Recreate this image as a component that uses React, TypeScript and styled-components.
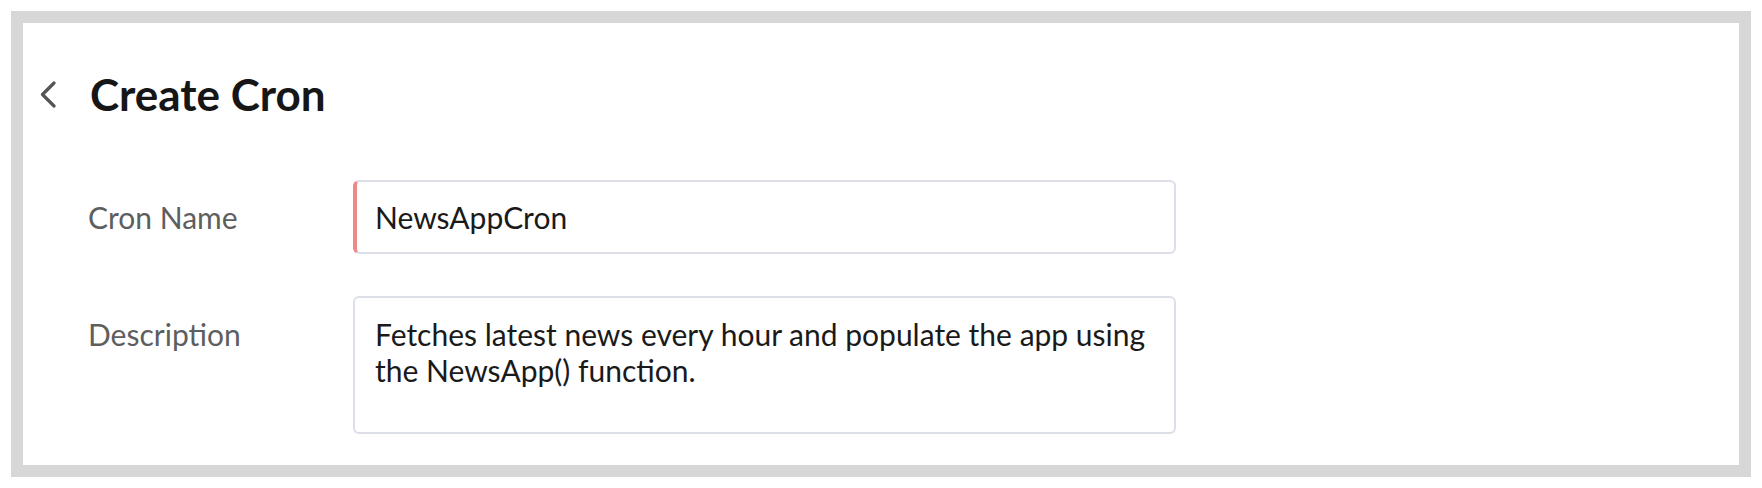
import styled, { createGlobalStyle } from "styled-components";

const GlobalStyle = createGlobalStyle`
  html, body {
    margin: 0;
    padding: 0;
    background: #ffffff;
    font-family: Lato, "Open Sans", sans-serif;
  }
  * {
    box-sizing: border-box;
  }
`;

const Frame = styled.div`
  margin: 11px;
  height: 466px;
  border: 12px solid #d7d7d7;
  background: #ffffff;
  padding: 45px 0 0 16px;
`;

const Header = styled.div`
  display: flex;
  align-items: center;
  gap: 33px;
`;

const BackButton = styled.button`
  display: flex;
  align-items: center;
  justify-content: center;
  padding: 0;
  border: none;
  background: none;
  color: #555555;
  cursor: pointer;
`;

const Title = styled.h1`
  margin: 0;
  font-size: 44px;
  line-height: 53px;
  font-weight: 700;
  color: #161616;
`;

const Form = styled.form`
  display: flex;
  flex-direction: column;
  gap: 42px;
  margin: 59px 0 0 49px;
`;

const Row = styled.div<{ $top?: boolean }>`
  display: grid;
  grid-template-columns: 265px 823px;
  align-items: ${(p) => (p.$top ? "start" : "center")};
`;

const Label = styled.label<{ $offset?: number }>`
  font-size: 30px;
  line-height: 36px;
  color: #5e5e5e;
  padding-top: ${(p) => p.$offset ?? 0}px;
`;

const Input = styled.input<{ $error?: boolean }>`
  height: 74px;
  padding: 0 20px 0 18px;
  font-family: inherit;
  font-size: 30px;
  color: #1a1a1a;
  border: 2px solid #dcdee8;
  border-left: 4px solid ${(p) => (p.$error ? "#ec8a86" : "#dcdee8")};
  border-radius: 6px;
  outline: none;
  background: #ffffff;
`;

const TextArea = styled.textarea`
  height: 138px;
  padding: 18px 20px 0 20px;
  font-family: inherit;
  font-size: 30px;
  line-height: 36px;
  color: #1a1a1a;
  border: 2px solid #dcdee8;
  border-radius: 6px;
  outline: none;
  resize: none;
  background: #ffffff;
`;

function ChevronLeft() {
  return (
    <svg width="18" height="27" viewBox="0 0 18 27" fill="none">
      <polyline
        points="15,2 3.5,13.5 15,25"
        stroke="currentColor"
        strokeWidth="3.2"
        strokeLinecap="round"
        strokeLinejoin="round"
      />
    </svg>
  );
}

export default function App() {
  return (
    <>
      <GlobalStyle />
      <Frame>
        <Header>
          <BackButton aria-label="Back">
            <ChevronLeft />
          </BackButton>
          <Title>Create Cron</Title>
        </Header>
        <Form>
          <Row>
            <Label htmlFor="cron-name">Cron Name</Label>
            <Input id="cron-name" $error defaultValue="NewsAppCron" />
          </Row>
          <Row $top>
            <Label htmlFor="cron-desc" $offset={20}>
              Description
            </Label>
            <TextArea
              id="cron-desc"
              defaultValue="Fetches latest news every hour and populate the app using the NewsApp() function."
            />
          </Row>
        </Form>
      </Frame>
    </>
  );
}
